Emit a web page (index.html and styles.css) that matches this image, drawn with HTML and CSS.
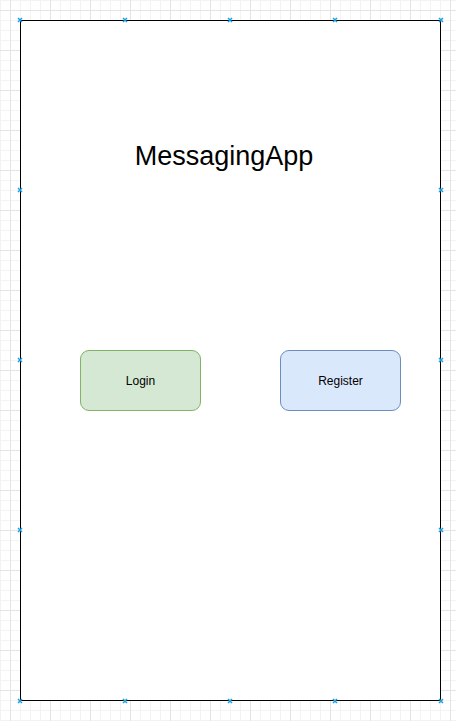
FILE: index.html
```html
<!DOCTYPE html>
<html>
<head>
<meta charset="utf-8">
<link rel="stylesheet" href="styles.css">
</head>
<body>
<div class="frame">
  <h1 class="title">MessagingApp</h1>
  <div class="actions">
    <div class="btn btn-login">Login</div>
    <div class="btn btn-register">Register</div>
  </div>

  <svg class="mark m-t1" viewBox="0 0 6 6"><path d="M1 1L5 5M5 1L1 5"/></svg>
  <svg class="mark m-t2" viewBox="0 0 6 6"><path d="M1 1L5 5M5 1L1 5"/></svg>
  <svg class="mark m-t3" viewBox="0 0 6 6"><path d="M1 1L5 5M5 1L1 5"/></svg>
  <svg class="mark m-t4" viewBox="0 0 6 6"><path d="M1 1L5 5M5 1L1 5"/></svg>
  <svg class="mark m-t5" viewBox="0 0 6 6"><path d="M1 1L5 5M5 1L1 5"/></svg>
  <svg class="mark m-b1" viewBox="0 0 6 6"><path d="M1 1L5 5M5 1L1 5"/></svg>
  <svg class="mark m-b2" viewBox="0 0 6 6"><path d="M1 1L5 5M5 1L1 5"/></svg>
  <svg class="mark m-b3" viewBox="0 0 6 6"><path d="M1 1L5 5M5 1L1 5"/></svg>
  <svg class="mark m-b4" viewBox="0 0 6 6"><path d="M1 1L5 5M5 1L1 5"/></svg>
  <svg class="mark m-b5" viewBox="0 0 6 6"><path d="M1 1L5 5M5 1L1 5"/></svg>
  <svg class="mark m-l2" viewBox="0 0 6 6"><path d="M1 1L5 5M5 1L1 5"/></svg>
  <svg class="mark m-l3" viewBox="0 0 6 6"><path d="M1 1L5 5M5 1L1 5"/></svg>
  <svg class="mark m-l4" viewBox="0 0 6 6"><path d="M1 1L5 5M5 1L1 5"/></svg>
  <svg class="mark m-r2" viewBox="0 0 6 6"><path d="M1 1L5 5M5 1L1 5"/></svg>
  <svg class="mark m-r3" viewBox="0 0 6 6"><path d="M1 1L5 5M5 1L1 5"/></svg>
  <svg class="mark m-r4" viewBox="0 0 6 6"><path d="M1 1L5 5M5 1L1 5"/></svg>
</div>
</body>
</html>
```

FILE: styles.css
```css
html, body {
  margin: 0;
  padding: 0;
}
body {
  width: 456px;
  height: 721px;
  overflow: hidden;
  font-family: "Liberation Sans", Arial, sans-serif;
  background-color: #ffffff;
  background-image:
    linear-gradient(to right, #e4e4e4 1px, transparent 1px),
    linear-gradient(to bottom, #e4e4e4 1px, transparent 1px),
    linear-gradient(to right, #f3f3f3 1px, transparent 1px),
    linear-gradient(to bottom, #f3f3f3 1px, transparent 1px);
  background-size: 40px 40px, 40px 40px, 10px 10px, 10px 10px;
  background-position: 10px 10px, 10px 10px, 0 0, 0 0;
}
.frame {
  position: relative;
  box-sizing: border-box;
  margin: 20px 0 0 20px;
  width: 421px;
  height: 681px;
  border: 1px solid #000000;
  background: #ffffff;
  padding-top: 122px;
}
.title {
  margin: 0 13px 0 0;
  font-weight: normal;
  font-size: 27px;
  line-height: 27px;
  text-align: center;
  color: #000000;
}
.actions {
  display: flex;
  gap: 79px;
  margin: 180px 0 0 59px;
}
.btn {
  box-sizing: border-box;
  width: 121px;
  height: 61px;
  border-radius: 9px;
  border: 1px solid;
  display: flex;
  align-items: center;
  justify-content: center;
  font-size: 12px;
  color: #000000;
}
.btn-login {
  background: #d5e8d4;
  border-color: #82b366;
}
.btn-register {
  background: #dae8fc;
  border-color: #6c8ebf;
}
.mark {
  position: absolute;
  width: 6px;
  height: 6px;
  fill: none;
  stroke: #1e9fe0;
  stroke-width: 1.5;
}
.m-t1, .m-t2, .m-t3, .m-t4, .m-t5 { top: -4px; }
.m-b1, .m-b2, .m-b3, .m-b4, .m-b5 { bottom: -4px; }
.m-t1, .m-b1, .m-l2, .m-l3, .m-l4 { left: -4px; }
.m-t5, .m-b5, .m-r2, .m-r3, .m-r4 { right: -4px; }
.m-t2, .m-b2 { left: 101px; }
.m-t3, .m-b3 { left: 206px; }
.m-t4, .m-b4 { left: 311px; }
.m-l2, .m-r2 { top: 166px; }
.m-l3, .m-r3 { top: 336px; }
.m-l4, .m-r4 { top: 506px; }
```
